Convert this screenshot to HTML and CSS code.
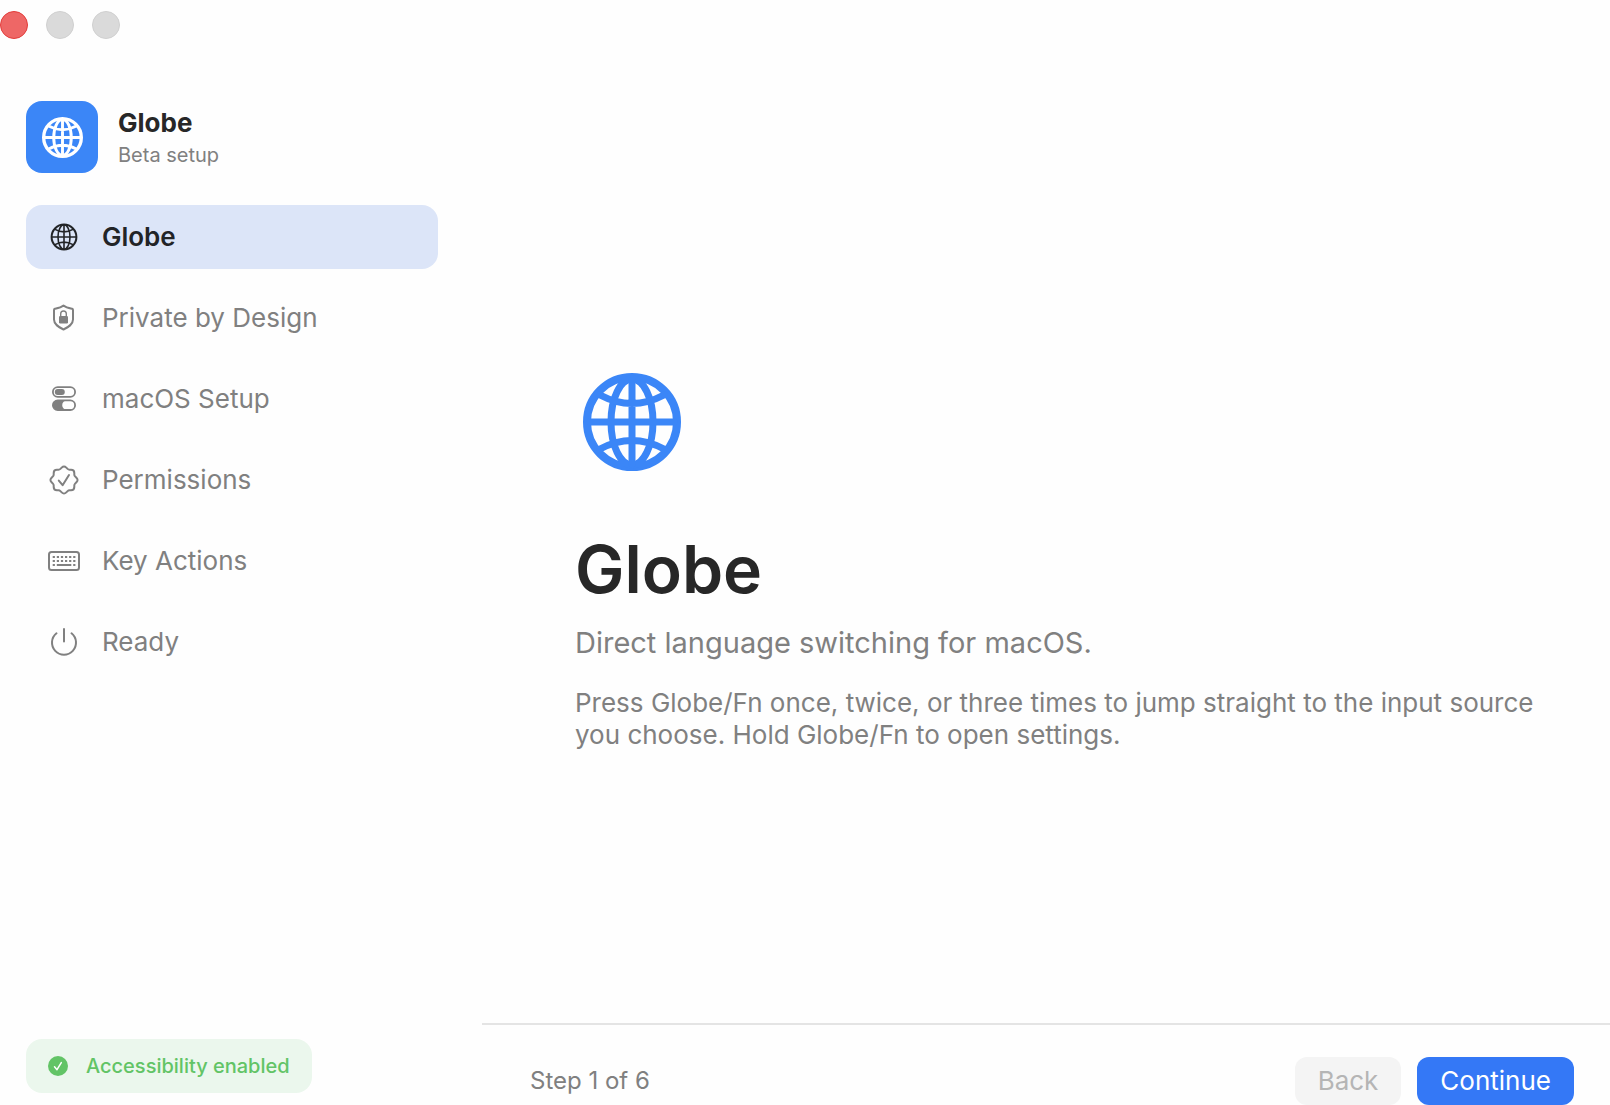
FILE: index.html
```html
<!DOCTYPE html>
<html lang="en">
<head>
    <meta charset="UTF-8">
    <meta name="viewport" content="width=device-width, initial-scale=1.0">
    <title>Globe Setup</title>
    <link rel="stylesheet" href="styles.css">
</head>
<body>
    <!-- Shared icon shapes -->
    <svg class="icon-defs" aria-hidden="true">
        <symbol id="globe" viewBox="0 0 98 98">
            <circle cx="49" cy="49" r="45" stroke-width="8"/>
            <ellipse cx="49" cy="49" rx="21" ry="43"/>
            <path d="M49 7v84M7 49h84M17 22q32 17 64 0M17 76q32-17 64 0"/>
        </symbol>
    </svg>

    <div class="window">
        <aside class="sidebar">
            <div class="window-controls">
                <button class="control close" type="button" aria-label="Close"></button>
                <button class="control" type="button" aria-label="Minimize" disabled></button>
                <button class="control" type="button" aria-label="Zoom" disabled></button>
            </div>

            <div class="brand">
                <div class="app-icon">
                    <svg class="globe-small"><use href="#globe"/></svg>
                </div>
                <div class="brand-text">
                    <div class="brand-name">Globe</div>
                    <div class="brand-note">Beta setup</div>
                </div>
            </div>

            <nav class="steps">
                <a class="step active" href="#welcome" aria-current="step">
                    <svg class="step-icon" viewBox="0 0 32 32">
                        <circle cx="16" cy="16" r="12.4"/>
                        <ellipse cx="16" cy="16" rx="6" ry="12.2" stroke-width="1.6"/>
                        <path stroke-width="1.6" d="M16 4v24M4 16h24M7 8.400q9 5 18 0M7 23.600q9-5 18 0"/>
                    </svg>
                    Globe
                </a>
                <a class="step" href="#privacy">
                    <svg class="step-icon" viewBox="0 0 32 32">
                        <path d="M15.500 3.500C18 5.500 21.500 6.200 24.200 6.800Q25 7 25 8V17.500C25 22.500 20.500 25 15.500 27.500C10.500 25 6 22.500 6 17.500V8Q6 7 6.800 6.800C9.500 6.200 13 5.500 15.500 3.500Z"/>
                        <rect class="solid" x="11" y="14" width="9" height="7.500" rx="1.200"/>
                        <path stroke-width="1.4" d="M12.700 14.500v-2.700a2.800 2.800 0 0 1 5.600 0v2.700"/>
                    </svg>
                    Private by Design
                </a>
                <a class="step" href="#macos">
                    <svg class="step-icon" viewBox="0 0 32 32">
                        <rect x="4.900" y="4.200" width="22.200" height="9.600" rx="4.800" stroke-width="1.8"/>
                        <rect class="solid" x="6.800" y="6.100" width="10" height="5.800" rx="2.900"/>
                        <rect x="4.900" y="17.400" width="22.200" height="9.600" rx="4.800" stroke-width="1.8"/>
                        <path class="solid" d="M9.700 17.400H19a4.800 4.800 0 0 0 0 9.600H9.700a4.800 4.800 0 0 1 0-9.600Z"/>
                    </svg>
                    macOS Setup
                </a>
                <a class="step" href="#permissions">
                    <svg class="step-icon" viewBox="0 0 32 32">
                        <path d="M13.700 3.600Q16 1.300 18.300 3.600L19.600 4.900Q20.400 5.700 21.500 5.700H23.100Q26.300 5.700 26.300 8.900V10.500Q26.300 11.600 27.100 12.400L28.400 13.700Q30.700 16 28.400 18.300L27.100 19.600Q26.300 20.400 26.300 21.500V23.100Q26.300 26.300 23.100 26.300H21.500Q20.400 26.300 19.600 27.100L18.300 28.400Q16 30.700 13.700 28.400L12.400 27.100Q11.600 26.300 10.500 26.300H8.900Q5.700 26.300 5.700 23.100V21.500Q5.700 20.400 4.900 19.600L3.600 18.300Q1.300 16 3.600 13.700L4.900 12.400Q5.700 11.600 5.700 10.500V8.900Q5.700 5.700 8.900 5.700H10.500Q11.600 5.700 12.400 4.900Z"/>
                        <path d="M10.800 16.600L14.600 21.200L21 11"/>
                    </svg>
                    Permissions
                </a>
                <a class="step" href="#keys">
                    <svg class="step-icon" viewBox="0 0 32 32">
                        <rect x="1" y="7" width="30" height="18" rx="2.500"/>
                        <path class="keys" stroke-dasharray="2.2 1.900" d="M4.700 12h22.700M4.700 16h22.700"/>
                        <path class="keys" d="M4.700 20h2.200M8.800 20h14.500M25.200 20h2.200"/>
                    </svg>
                    Key Actions
                </a>
                <a class="step" href="#ready">
                    <svg class="step-icon" viewBox="0 0 32 32">
                        <path d="M16 3v12.500M8.500 7.300A12 12 0 1 0 23.500 7.300"/>
                    </svg>
                    Ready
                </a>
            </nav>

            <div class="status">
                <svg class="status-icon" viewBox="0 0 20 20">
                    <circle cx="10" cy="10" r="10"/>
                    <path d="M6.500 10.800L9 13.700L13.300 6.600"/>
                </svg>
                Accessibility enabled
            </div>
        </aside>

        <div class="content">
            <main class="hero">
                <svg class="globe-large"><use href="#globe"/></svg>
                <h1>Globe</h1>
                <p class="tagline">Direct language switching for macOS.</p>
                <p class="description">Press Globe/Fn once, twice, or three times to jump straight to the input source you choose. Hold Globe/Fn to open settings.</p>
            </main>

            <footer class="footer">
                <span class="progress">Step 1 of 6</span>
                <button class="button" type="button" disabled>Back</button>
                <button class="button primary" type="button">Continue</button>
            </footer>
        </div>
    </div>
</body>
</html>
```
FILE: styles.css
```css
* {
    margin: 0;
    padding: 0;
    box-sizing: border-box;
}

body {
    font-family: Inter, 'Liberation Sans', sans-serif;
    background: #fefefe;
    color: #272727;
}

svg {
    display: block;
    flex-shrink: 0;
    fill: none;
    stroke: currentColor;
    stroke-linecap: round;
    stroke-linejoin: round;
}

.icon-defs {
    position: absolute;
    width: 0;
    height: 0;
}

.window {
    display: grid;
    grid-template-columns: 482px 1fr;
    min-height: 100vh;
}

.sidebar {
    display: flex;
    flex-direction: column;
    align-items: flex-start;
    padding: 11px 44px 12px 26px;
}

.window-controls {
    display: flex;
    gap: 18px;
    margin-left: -26px;
    margin-bottom: 62px;
}

.control {
    width: 28px;
    height: 28px;
    border: 1px solid #d0d0d0;
    border-radius: 50%;
    background: #dadada;
}

.control.close {
    background: #ee6766;
    border-color: #e33c3a;
}

.brand {
    display: flex;
    align-items: center;
    gap: 20px;
    margin-bottom: 32px;
}

.brand-text {
    padding-top: 4px;
}

.app-icon {
    display: flex;
    align-items: center;
    justify-content: center;
    width: 72px;
    height: 72px;
    border-radius: 16px;
    background: #3b86f7;
    color: #fff;
}

.globe-small {
    width: 41px;
    height: 41px;
    stroke-width: 7px;
}

.brand-name {
    font-size: 26px;
    font-weight: 700;
    line-height: 32px;
}

.brand-note {
    font-size: 20px;
    line-height: 32px;
    color: #808080;
}

.steps {
    display: flex;
    flex-direction: column;
    align-self: stretch;
    gap: 17px;
}

.step {
    display: flex;
    align-items: center;
    gap: 22px;
    padding: 16px 22px;
    border-radius: 16px;
    font-size: 26px;
    line-height: 32px;
    color: #808080;
    text-decoration: none;
}

.step.active {
    background: #dce5f8;
    color: #222427;
    font-weight: 600;
}

.step-icon {
    width: 32px;
    height: 32px;
    stroke-width: 2px;
}

.solid {
    fill: currentColor;
    stroke: none;
}

.keys {
    stroke-linecap: butt;
}

.status {
    display: flex;
    align-items: center;
    gap: 18px;
    margin-top: auto;
    padding: 14px 22px;
    border-radius: 16px;
    background: #ebf7ed;
    color: #62c466;
    font-size: 20px;
    font-weight: 500;
    line-height: 26px;
}

.status-icon {
    width: 20px;
    height: 20px;
    fill: currentColor;
    stroke: none;
}

.status-icon path {
    fill: none;
    stroke: #fff;
    stroke-width: 1.5px;
}

.content {
    display: flex;
    flex-direction: column;
}

.hero {
    display: flex;
    flex: 1;
    flex-direction: column;
    justify-content: center;
    padding: 100px 72px 0 93px;
}

.globe-large {
    width: 98px;
    height: 98px;
    margin-left: 8px;
    margin-bottom: 56px;
    color: #3b86f7;
    stroke-width: 7px;
}

h1 {
    font-size: 66px;
    font-weight: 600;
    line-height: 84px;
    margin-bottom: 12px;
}

.tagline {
    margin-bottom: 24px;
    font-size: 29px;
    line-height: 40px;
    color: #808080;
}

.description {
    font-size: 26px;
    line-height: 32px;
    color: #808080;
}

.footer {
    display: flex;
    align-items: center;
    gap: 16px;
    padding: 32px 36px 0 48px;
    border-top: 2px solid #e4e4e4;
}

.progress {
    margin-right: auto;
    font-size: 24px;
    line-height: 32px;
    color: #808080;
}

.button {
    padding: 8px 23px;
    border: none;
    border-radius: 12px;
    background: #f4f4f4;
    font-family: inherit;
    font-size: 26px;
    line-height: 32px;
    color: #b5b5b5;
}

.button.primary {
    background: #3478f6;
    color: #fff;
}
```
